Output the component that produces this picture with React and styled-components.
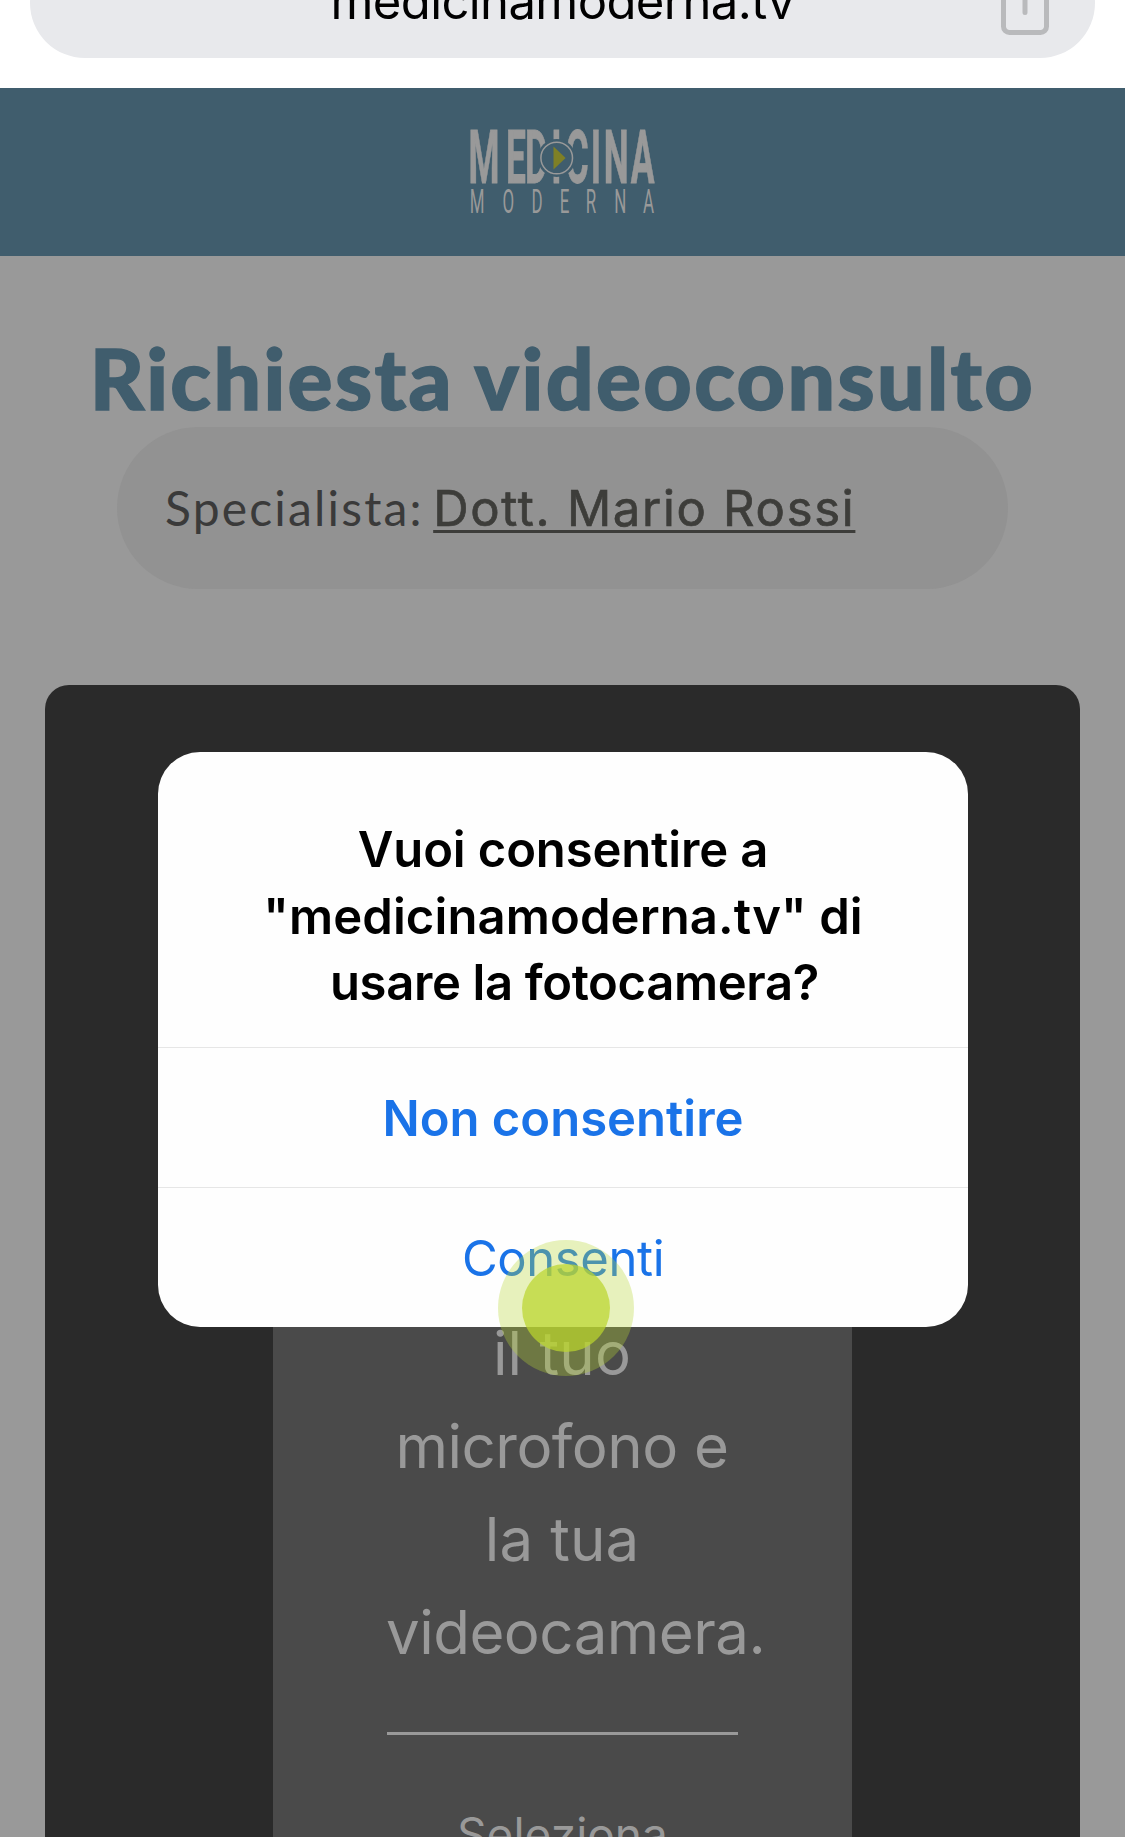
import React from "react";
import styled, { createGlobalStyle } from "styled-components";

const GlobalStyle = createGlobalStyle`
  *, *::before, *::after { box-sizing: border-box; }
  html, body { margin: 0; padding: 0; }
  body { background: #999; overflow: hidden; }
`;

const Screen = styled.div`
  position: relative;
  display: flex;
  flex-direction: column;
  width: 1125px;
  height: 1837px;
  overflow: hidden;
  background: #999;
  font-family: Inter, "Liberation Sans", sans-serif;
`;

const BrowserBar = styled.header`
  display: flex;
  flex: none;
  align-items: flex-end;
  height: 88px;
  padding: 0 30px 30px;
  overflow: hidden;
  background: #fff;
`;

const AddressField = styled.div`
  display: grid;
  flex: 1;
  grid-template-columns: 1fr auto 1fr;
  align-items: end;
  height: 110px;
  border-radius: 55px;
  background: #e8e9ec;
`;

const AddressText = styled.span`
  grid-column: 2;
  padding-bottom: 26px;
  color: #000;
  font-size: 49px;
  line-height: 60px;
  height: 86px;
  letter-spacing: -0.6px;
  white-space: nowrap;
`;

const ShareIcon = styled.svg`
  grid-column: 3;
  justify-self: end;
  width: 48px;
  height: 66px;
  margin: 0 46px 23px 0;
`;

const BrandBar = styled.div`
  display: flex;
  flex: none;
  justify-content: center;
  height: 168px;
  padding-top: 37px;
  background: #405d6d;
`;

const Logo = styled.svg`
  width: 195px;
  height: 94px;
  overflow: visible;
`;

const Main = styled.main`
  display: flex;
  flex: 1;
  flex-direction: column;
  align-items: center;
  min-height: 0;
  padding-top: 71px;
`;

const Title = styled.h1`
  flex: none;
  height: 100px;
  margin: 0;
  color: #405d6d;
  font-family: Lato, sans-serif;
  font-size: 84px;
  font-weight: 900;
  line-height: 101px;
  letter-spacing: 2.37px;
  white-space: nowrap;
  -webkit-text-stroke: 1.4px #405d6d;
`;

const SpecialistPill = styled.section`
  display: flex;
  flex: none;
  align-items: center;
  width: 891px;
  height: 162px;
  padding-left: 48px;
  border-radius: 81px;
  background: #929292;
`;

const SpecialistLine = styled.p`
  display: flex;
  align-items: baseline;
  gap: 9.5px;
  margin: 0;
  color: #3a3a3a;
  line-height: 60px;
  white-space: nowrap;
`;

const SpecialistLabel = styled.span`
  font-family: Lato, sans-serif;
  font-size: 48px;
  letter-spacing: 2.16px;
`;

const SpecialistLink = styled.a`
  color: #3d3d3a;
  font-size: 49px;
  font-weight: 400;
  letter-spacing: 1.7px;
  -webkit-text-stroke: 0.7px #3d3d3a;
  text-decoration: underline;
  text-decoration-skip-ink: none;
  text-decoration-thickness: 3px;
  text-underline-offset: 4px;
`;

const VideoCard = styled.section`
  display: flex;
  flex: 1;
  flex-direction: column;
  width: 1035px;
  min-height: 0;
  margin-top: 96px;
  padding: 515px 0 0 228px;
  overflow: hidden;
  border-radius: 24px 24px 0 0;
  background: #2a2a2a;
`;

const DevicePanel = styled.div`
  display: flex;
  flex: 1 0 auto;
  flex-direction: column;
  width: 579px;
  padding: 107px 114px 0;
  background: #4a4a4a;
  color: #999;
`;

const PanelLine = styled.div`
  height: 93px;
  margin-left: -1px;
  font-size: 60px;
  line-height: 93px;
  letter-spacing: ${(p) => p.$spacing || 0}px;
  text-align: center;
  white-space: nowrap;
`;

const Divider = styled.hr`
  flex: none;
  width: 351px;
  height: 3px;
  margin: 53px 0 62px;
  border: 0;
  background: #999;
`;

const PanelCaption = styled.div`
  font-size: 46px;
  line-height: 74px;
  text-align: center;
`;

const Dialog = styled.div`
  position: absolute;
  top: 752px;
  left: 158px;
  display: flex;
  flex-direction: column;
  width: 810px;
  height: 575px;
  overflow: hidden;
  border-radius: 42px;
  background: #fefefe;
`;

const DialogTitle = styled.h2`
  height: 295px;
  margin: 0;
  padding-top: 65px;
  color: #000;
  font-size: 49px;
  font-weight: 600;
  line-height: 66.5px;
  text-align: center;
`;

const DialogTitleLine = styled.span`
  display: block;
  padding-left: ${(p) => p.$indent || 0}px;
  letter-spacing: ${(p) => p.$spacing || 0}px;
`;

const DialogButton = styled.button`
  height: 140px;
  padding: 2px 0 0;
  border: 0;
  border-top: 1px solid #e6e6e6;
  background: transparent;
  color: #1a73e8;
  font-family: inherit;
  font-size: 49px;
  font-weight: ${(p) => (p.$strong ? 600 : 400)};
  letter-spacing: ${(p) => (p.$strong ? 0 : -0.4)}px;
`;

const TapMarker = styled.div`
  position: absolute;
  top: 1240px;
  left: 498px;
  display: grid;
  place-items: center;
  width: 136px;
  height: 136px;
  border-radius: 50%;
  background: rgba(184, 215, 52, 0.326);
`;

const TapCore = styled.div`
  width: 88px;
  height: 88px;
  border-radius: 50%;
  background: rgba(187, 213, 46, 0.72);
`;

function MedicinaLogo() {
  return (
    <Logo viewBox="465 125 195 94" role="img" aria-label="Medicina Moderna">
      <g fill="#999" fontFamily="Roboto, sans-serif">
        <text
          transform="translate(0 183) scale(0.48 1)"
          x="976 1054 1094 1148.5 1178 1230.5 1258 1314"
          y="0"
          fontSize="73.6"
          fontWeight="700"
          stroke="#999"
          strokeWidth="0.8"
        >
          MEDICINA
        </text>
        <text
          transform="translate(0 213) scale(0.5 1)"
          x="939.5 1005 1062.8 1119.5 1171.5 1228.7 1286"
          y="0"
          fontSize="33.8"
          fontWeight="400"
        >
          MODERNA
        </text>
      </g>
      <circle cx="556.7" cy="158" r="19" fill="#405d6d" />
      <circle cx="556.7" cy="158" r="15.8" fill="none" stroke="#999" strokeWidth="1.5" />
      <path d="M553.5 146.500 L565.600 158 L553.500 169.500 Z" fill="#7f8026" />
    </Logo>
  );
}

export default function App() {
  return (
    <Screen>
      <GlobalStyle />
      <BrowserBar>
        <AddressField>
          <AddressText>medicinamoderna.tv</AddressText>
          <ShareIcon viewBox="0 0 48 66" fill="none" stroke="#b9babc" strokeWidth="5" strokeLinecap="round">
            <path d="M16 22.5H8.5a6 6 0 0 0-6 6V57.500a6 6 0 0 0 6 6h31a6 6 0 0 0 6-6V28.500a6 6 0 0 0-6-6H32" />
            <path d="M24 43.500V4M14 13L24 3L34 13" />
          </ShareIcon>
        </AddressField>
      </BrowserBar>
      <BrandBar>
        <MedicinaLogo />
      </BrandBar>
      <Main>
        <Title>Richiesta videoconsulto</Title>
        <SpecialistPill>
          <SpecialistLine>
            <SpecialistLabel>Specialista:</SpecialistLabel>
            <SpecialistLink>Dott. Mario Rossi</SpecialistLink>
          </SpecialistLine>
        </SpecialistPill>
        <VideoCard>
          <DevicePanel>
            <PanelLine $spacing={0.2}>il tuo</PanelLine>
            <PanelLine $spacing={-0.5}>microfono e</PanelLine>
            <PanelLine $spacing={0.1}>la tua</PanelLine>
            <PanelLine $spacing={-0.53}>videocamera.</PanelLine>
            <Divider />
            <PanelCaption>Seleziona</PanelCaption>
          </DevicePanel>
        </VideoCard>
      </Main>
      <Dialog role="alertdialog">
        <DialogTitle>
          <DialogTitleLine $spacing={-0.14}>Vuoi consentire a</DialogTitleLine>
          <DialogTitleLine $spacing={0.1}>"medicinamoderna.tv" di</DialogTitleLine>
          <DialogTitleLine $spacing={-0.37} $indent={23}>usare la fotocamera?</DialogTitleLine>
        </DialogTitle>
        <DialogButton $strong>Non consentire</DialogButton>
        <DialogButton>Consenti</DialogButton>
      </Dialog>
      <TapMarker>
        <TapCore />
      </TapMarker>
    </Screen>
  );
}
